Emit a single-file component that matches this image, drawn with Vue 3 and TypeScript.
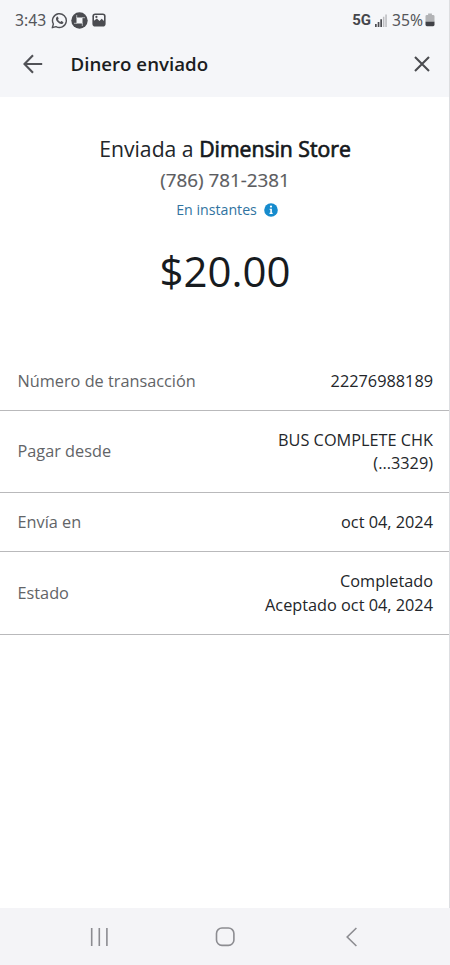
<script setup lang="ts">
interface DetailRow {
  label: string
  values: string[]
}

const rows: DetailRow[] = [
  { label: 'Número de transacción', values: ['22276988189'] },
  { label: 'Pagar desde', values: ['BUS COMPLETE CHK', '(...3329)'] },
  { label: 'Envía en', values: ['oct 04, 2024'] },
  { label: 'Estado', values: ['Completado', 'Aceptado oct 04, 2024'] },
]
</script>

<template>
  <div class="screen">
    <div class="top">
      <div class="status">
        <span class="time">3:43</span>
        <svg class="whatsapp" width="17" height="17" viewBox="0 0 17 17" fill="none">
          <path d="M1.3 15.7 2.4 12A6.9 6.9 0 1 1 5 14.6Z" stroke="#505156" stroke-width="1.4" stroke-linejoin="round" />
          <path d="M5.9 4.7c.5-.3.9-.1 1.1.4l.6 1.3c.1.4-.5.9-.7 1.2.5 1.1 1.4 1.9 2.5 2.4.4-.3.8-1 1.2-.9l1.5.8c.5.3.2 1.2-.2 1.6-1.3 1.2-3.6.3-5.3-1.4C4.9 8.4 4.2 6 5.9 4.7Z" fill="#505156" />
        </svg>
        <svg class="chase" width="17" height="17" viewBox="0 0 17 17">
          <circle cx="8.5" cy="8.5" r="8.2" fill="#4b4c51" />
          <path d="M5.5 5.5h6v6h-6z" fill="#f5f6f9" />
          <path d="M5.700 6V3M11 5.700h3M11.300 11v3M6 11.300H3" stroke="#f5f6f9" stroke-width=".6" />
        </svg>
        <svg class="gallery" width="14" height="14" viewBox="0 0 14 14">
          <rect x=".4" y=".4" width="13.2" height="13.2" rx="2.8" fill="#4b4c51" />
          <path d="M2 7.8V3.2Q2 2 3.2 2h7.6Q12 2 12 3.2v4.800L9.700 5.700 7.500 7.900 4.900 5.500Z" fill="#f5f6f9" />
          <circle cx="4.4" cy="3.9" r="1.1" fill="#4b4c51" />
        </svg>
        <span class="network">5G</span>
        <svg class="signal" width="12" height="13" viewBox="0 0 12 13">
          <path d="M0 10h1.700v3H0zM2.700 8h1.700v5H2.700zM5.300 5.200H7V13H5.300z" fill="#4b4c51" />
          <path d="M7.900 2.700h1.500V13H7.900zM10.300.5h1.500V13h-1.500z" fill="#bbbcc0" />
        </svg>
        <span class="percent">35%</span>
        <svg class="battery" width="10" height="14" viewBox="0 0 10 14">
          <path d="M3.100.4h3.800v1.500h1.200q1.400 0 1.400 1.400V9H.5V3.300q0-1.400 1.400-1.400h1.200z" fill="#b2b3b6" />
          <path d="M.5 8.800h9v3q0 1.400-1.400 1.400H1.900Q.5 13.200.5 11.800z" fill="#404146" />
        </svg>
      </div>
      <header class="bar">
        <svg width="20" height="20" viewBox="0 0 20 20" fill="none" stroke="#515257" stroke-width="2.1">
          <path d="M19.200 10H1.700M10 1.300 1.500 10l8.500 8.700" />
        </svg>
        <h1>Dinero enviado</h1>
        <svg width="16" height="16" viewBox="0 0 16 16" fill="none" stroke="#4b4c50" stroke-width="2.1">
          <path d="m1 1 14 14M15 1 1 15" />
        </svg>
      </header>
    </div>
    <main>
      <section class="summary">
        <p class="recipient"><span>Enviada a</span> <strong>Dimensin Store</strong></p>
        <p class="phone">(786) 781-2381</p>
        <p class="speed">
          <span>En instantes</span>
          <svg width="14" height="14" viewBox="0 0 14 14">
            <circle cx="7" cy="7" r="6.8" fill="#168bcd" />
            <circle cx="7" cy="3.6" r="1.1" fill="#fff" />
            <path d="M5.600 5.700h2.300v4.100h.8v1.100H5.500V9.800h.8V6.800h-.7z" fill="#fff" />
          </svg>
        </p>
        <p class="amount">$20.00</p>
      </section>
      <dl>
        <div v-for="row in rows" :key="row.label" class="row">
          <dt>{{ row.label }}</dt>
          <dd><span v-for="value in row.values" :key="value">{{ value }}</span></dd>
        </div>
      </dl>
    </main>
    <nav>
      <svg width="20" height="20" viewBox="0 0 20 20" stroke="#8c8c91" stroke-width="1.6">
        <path d="M2.700 1v18M10.300 1v18M17.900 1v18" />
      </svg>
      <svg width="20" height="20" viewBox="0 0 20 20" fill="none" stroke="#8c8c91" stroke-width="1.6">
        <rect x="1.5" y="1" width="17.4" height="17.4" rx="5.5" />
      </svg>
      <svg width="20" height="20" viewBox="0 0 20 20" fill="none" stroke="#8c8c91" stroke-width="1.6">
        <path d="M15.400 1 6.200 10l9.200 9" />
      </svg>
    </nav>
  </div>
</template>

<style>
body {
  background: #fff;
}
</style>

<style scoped>
.screen {
  box-sizing: border-box;
  width: 450px;
  height: 965px;
  display: flex;
  flex-direction: column;
  overflow: hidden;
  font-family: "Open Sans", "Noto Sans", sans-serif;
  color: #23262a;
}

svg {
  display: block;
  flex: none;
}

p, h1, dl, dd {
  margin: 0;
}

.top {
  box-sizing: border-box;
  height: 97px;
  background: #f5f6f9;
  border-right: 1px solid #dddee1;
}

.status {
  height: 40px;
  display: flex;
  align-items: center;
  padding: 0 14px 0 15px;
  color: #55565b;
  font-family: "Noto Sans", sans-serif;
  font-size: 15.7px;
}

.time {
  width: 36px;
  white-space: nowrap;
}

.chase {
  margin-left: 3px;
}

.gallery {
  margin-left: 4px;
}

.network {
  margin-left: auto;
  font-family: Roboto, sans-serif;
  font-size: 15px;
  font-weight: 700;
  color: #45464b;
}

.signal {
  margin: 0 5px 0 4px;
}

.battery {
  margin-left: 2px;
}

.bar {
  height: 48px;
  display: flex;
  align-items: center;
  padding: 0 19px 0 23px;
}

h1 {
  flex: 1;
  margin-left: 27.5px;
  font-size: 18.7px;
  line-height: 24px;
  font-weight: 600;
  color: #1b1d21;
}

main {
  box-sizing: border-box;
  height: 811px;
  border-right: 1px solid #dddee1;
}

.summary {
  height: 254.7px;
  box-sizing: border-box;
  padding-top: 37px;
  padding-left: 1px;
  display: flex;
  flex-direction: column;
  align-items: center;
  white-space: nowrap;
}

.recipient {
  font-size: 21.2px;
  line-height: 30px;
}

strong {
  font-weight: 400;
  -webkit-text-stroke: .7px #15181c;
  color: #15181c;
}

.phone {
  padding-top: 1px;
  font-size: 18.8px;
  line-height: 30px;
  color: #5b5c5f;
  -webkit-text-stroke: .2px #5b5c5f;
}

.speed {
  display: flex;
  align-items: center;
  gap: 7px;
  padding-left: 4px;
  font-size: 14.2px;
  line-height: 29px;
  color: #31739f;
}

.amount {
  margin-top: 17px;
  font-size: 42px;
  line-height: 60px;
  color: #171b1f;
}

.row {
  display: flex;
  justify-content: space-between;
  align-items: center;
  padding: 17.95px 16px 16.75px 17.5px;
  border-bottom: 1px solid #b9b9bb;
  font-size: 16.3px;
  line-height: 23.4px;
}

dt {
  color: #626467;
}

dd {
  display: flex;
  flex-direction: column;
  align-items: flex-end;
}

nav {
  height: 57px;
  display: flex;
  align-items: center;
  justify-content: space-between;
  padding: 0 89px;
  background: #f4f4f7;
}
</style>
